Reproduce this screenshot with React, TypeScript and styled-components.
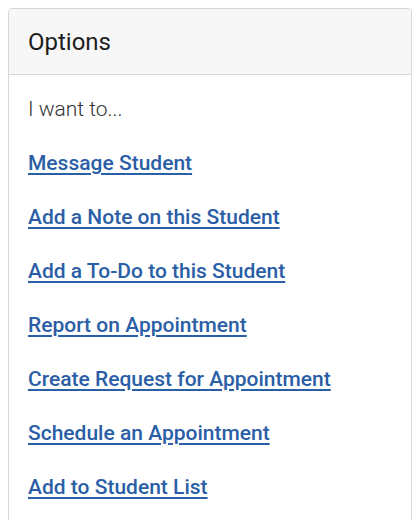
import styled, { createGlobalStyle } from 'styled-components';

const GlobalStyle = createGlobalStyle`
  body {
    margin: 8px;
    background: #fff;
    font-family: Roboto, "Liberation Sans", sans-serif;
  }
`;

const Card = styled.section`
  border: 1px solid #d6d6d6;
  border-radius: 4px;
  background: #fff;
  overflow: hidden;
`;

const CardHeader = styled.header`
  background: #f7f7f7;
  border-bottom: 1px solid #d6d6d6;
  padding: 0 19px;
  height: 65px;
  display: flex;
  align-items: center;
`;

const Title = styled.h2`
  margin: 0;
  font-size: 24px;
  font-weight: 400;
  color: #1d1d1d;
`;

const CardBody = styled.div`
  padding: 20px 19px 14px;
  display: flex;
  flex-direction: column;
`;

const Intro = styled.p`
  margin: 0 0 26px;
  font-size: 21px;
  font-weight: 300;
  color: #333;
  line-height: 28px;
`;

const OptionLink = styled.a`
  font-size: 21px;
  font-weight: 500;
  color: #2a5ea6;
  text-decoration: underline;
  text-decoration-thickness: 2px;
  text-underline-offset: 3px;
  line-height: 28px;
  margin-bottom: 26px;
  align-self: flex-start;
  cursor: pointer;
`;

const options = [
  'Message Student',
  'Add a Note on this Student',
  'Add a To-Do to this Student',
  'Report on Appointment',
  'Create Request for Appointment',
  'Schedule an Appointment',
  'Add to Student List',
];

export default function App() {
  return (
    <>
      <GlobalStyle />
      <Card>
        <CardHeader>
          <Title>Options</Title>
        </CardHeader>
        <CardBody>
          <Intro>I want to...</Intro>
          {options.map((o) => (
            <OptionLink key={o} href="#">{o}</OptionLink>
          ))}
        </CardBody>
      </Card>
    </>
  );
}
